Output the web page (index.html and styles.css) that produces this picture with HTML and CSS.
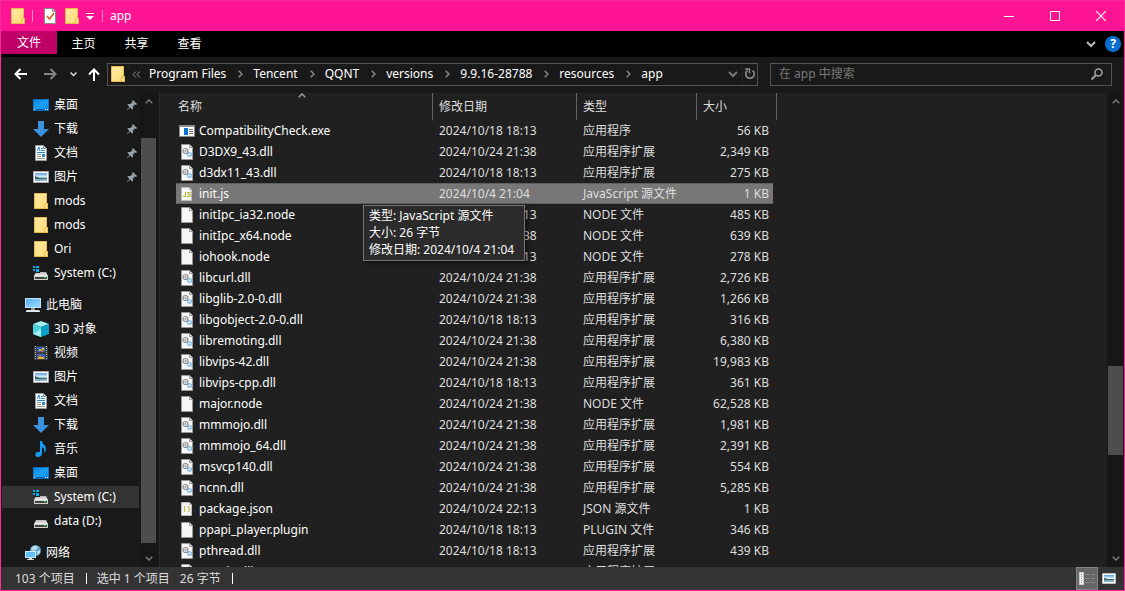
FILE: index.html
```html
<!DOCTYPE html>
<html lang="zh-CN">
<head>
<meta charset="utf-8">
<title>app</title>
<link rel="stylesheet" href="styles.css">
</head>
<body>

<svg class="sprite" aria-hidden="true">
  <defs>
    <linearGradient id="g-folder" x2="1" y2="1"><stop offset="0" stop-color="#ffe9a2"/><stop offset="1" stop-color="#ffdb78"/></linearGradient>
    <linearGradient id="g-blue" x2="1" y2="1"><stop offset="0" stop-color="#0a84e0"/><stop offset=".5" stop-color="#1ba0fb"/><stop offset="1" stop-color="#0d8cf0"/></linearGradient>
    <linearGradient id="g-sky" x2="0" y2="1"><stop offset="0" stop-color="#5a9ee0"/><stop offset=".5" stop-color="#e4f2f8"/><stop offset=".6" stop-color="#6f9fae"/><stop offset="1" stop-color="#8fb8d4"/></linearGradient>
    <linearGradient id="g-screen" x2="1" y2="1"><stop offset="0" stop-color="#56b4f4"/><stop offset="1" stop-color="#9ad8ff"/></linearGradient>
    <linearGradient id="g-drive" x2="0" y2="1"><stop offset="0" stop-color="#b5b5b5"/><stop offset="1" stop-color="#f2f2f2"/></linearGradient>
  </defs>
  <symbol id="folder" viewBox="0 0 16 16">
    <path d="M1.5 0.5h12v10h1v5h-13z" fill="url(#g-folder)" stroke="#e8bb4c"/>
    <path d="M11.5 15.5v-4h1v-1h2v5z" fill="#ffe28c" stroke="#e8bb4c"/>
  </symbol>
  <symbol id="desktop" viewBox="0 0 16 16">
    <path d="M0 2h16v12H0z" fill="#0a72c4"/>
    <path d="M1 3h14v9H1z" fill="url(#g-blue)"/>
    <path d="M1 12h1v1H1zM12 12h1v1h-1zM14 12h1v1h-1z" fill="#fff"/>
    <path d="M3 12h8v1H3z" fill="#0862ae"/>
  </symbol>
  <symbol id="download" viewBox="0 0 16 16">
    <path d="M5 0h6v8h5l-8 8-8-8h5z" fill="#3b92de"/>
  </symbol>
  <symbol id="document" viewBox="0 0 16 16">
    <path d="M2.5.5h8l3 3v12h-11z" fill="#fff" stroke="#999"/>
    <path d="M10.500.5v3h3z" fill="#ccc" stroke="#999"/>
    <path d="M4 6l2-4 1 4M8 3.500h2M8 5.500h4M4 7.500h8" fill="none" stroke="#2486cc"/>
    <path d="M4 9.500h4M4 11.500h4M4 13.500h8" stroke="#999"/>
    <path d="M9 9h3v3H9z" fill="#3580b8"/>
  </symbol>
  <symbol id="picture" viewBox="0 0 16 16">
    <path d="M.5 2.500h15v11H.5z" fill="#fff" stroke="#aaa"/>
    <path d="M2 4h12v8H2z" fill="url(#g-sky)"/>
    <path d="M2 7l4 2 8 .5v.5H2z" fill="#35685a"/>
  </symbol>
  <symbol id="drive" viewBox="0 0 16 16">
    <path d="M3 7h10l2 4H1z" fill="url(#g-drive)"/>
    <path d="M1 11h14v4H1z" fill="#cfcfcf"/>
    <path d="M2 12h12v2H2z" fill="#444"/>
    <path d="M11 12h2v1h-2z" fill="#35e045"/>
  </symbol>
  <symbol id="system-drive" viewBox="0 0 16 16">
    <use href="#drive"/>
    <path d="M0 1h7v7H0z" fill="#222"/>
    <path d="M0 1h2v2H0zM3 1h3v2H3zM0 4h2v2H0zM3 4h3v3H3z" fill="#00adef"/>
  </symbol>
  <symbol id="computer" viewBox="0 0 16 16">
    <path d="M0 1h16v10H0z" fill="#bfe3f8"/>
    <path d="M1 2h14v8H1z" fill="url(#g-screen)"/>
    <path d="M6 11h4v2H6z" fill="#999"/>
    <path d="M1 14l1-1h12l1 1v1H1z" fill="#dce6ec"/>
  </symbol>
  <symbol id="cube" viewBox="0 0 16 16">
    <path d="M8 0l8 3-8 3-8-3z" fill="#a2eef2"/>
    <path d="M0 3l8 3v10l-8-3z" fill="#4cd4e0"/>
    <path d="M16 3L8 6v10l8-3z" fill="#0c9fc8"/>
    <path d="M0 13l8-5v8z" fill="#a4ebef"/>
  </symbol>
  <symbol id="video" viewBox="0 0 16 16">
    <path d="M1 1h14v14H1z" fill="#3c3c3c"/>
    <path d="M2.500 1v14M13.500 1v14" stroke="#aaa" stroke-dasharray="1 1"/>
    <path d="M4 2h8v5H4zM4 9h8v5H4z" fill="#2f63c4"/>
    <path d="M6 4h2v2H6zM9 3h2v2H9zM5 12h6v2H5z" fill="#e3b32c"/>
    <path d="M8 5h2v2H8zM6 10h2v2H6z" fill="#d2622f"/>
  </symbol>
  <symbol id="music" viewBox="0 0 16 16">
    <path d="M7 0h2c0 3 4 4 4 8 0 2-1 3-2 4 1-3 0-5-2-6v6c0 3-2 4-4 4-4 0-3-5 0-5h2z" fill="#159cf5"/>
  </symbol>
  <symbol id="network" viewBox="0 0 16 16">
    <circle cx="10.500" cy="5.500" r="5.500" fill="#5c9fc8"/>
    <path d="M6 4c2-4 5-4 7-2l-2 3-3 1zM12 6l3-1v3l-3 2z" fill="#b7dcea"/>
    <path d="M0 6h11v7H0z" fill="#cceafa"/>
    <path d="M1 7h9v5H1z" fill="#62bcf8"/>
    <path d="M4 13h3v1h2v1H2v-1h2z" fill="#d5d5d5"/>
  </symbol>
  <symbol id="pin" viewBox="0 0 10 10">
    <path d="M6 0l4 4-1 1-1-.5-2 2V9L5 9.500 3 7.500.5 10 0 9.500 2.500 7 .5 5 1 4h2.500l2-2L5 1z" fill="#929ea6"/>
  </symbol>
  <symbol id="file" viewBox="0 0 16 16">
    <path d="M2.500.5h8l3 3v12h-11z" fill="#f6f6f6" stroke="#9a9a9a"/>
    <path d="M10.500.5v3h3" fill="#ddd" stroke="#9a9a9a"/>
  </symbol>
  <symbol id="short-file" viewBox="0 0 16 16">
    <path d="M2.500 1.500h8l2 2v11h-10z" fill="#f6f6f6" stroke="#bbb"/>
    <path d="M10.500 1.500v2h2" fill="#ddd" stroke="#aaa"/>
  </symbol>
  <symbol id="dll" viewBox="0 0 16 16">
    <use href="#file"/>
    <circle cx="10.500" cy="10.500" r="1.800" fill="#e6f2fa" stroke="#8fc0e4" stroke-width="1.400"/>
    <circle cx="6.500" cy="7" r="2.500" fill="#eee" stroke="#8b9094" stroke-width="1.200"/>
    <circle cx="6.500" cy="7" r=".9" fill="#8b9094"/>
  </symbol>
  <symbol id="exe" viewBox="0 0 16 16">
    <path d="M.5 2.500h15v11H.5z" fill="#fff" stroke="#8c8c8c"/>
    <path d="M0 2h16v2H0z" fill="#8c8c8c"/>
    <path d="M5 5h4v7H5z" fill="#0874d1"/>
    <path d="M10 6.500h4M10 8.500h4M10 10.500h4" stroke="#777"/>
  </symbol>
  <symbol id="js" viewBox="0 0 16 16">
    <use href="#short-file"/>
    <path d="M6.500 6v4.500H4M11.500 6.500H9v1.500h2v2.500H8" fill="none" stroke="#bcbb3c" stroke-width="1.200"/>
  </symbol>
  <symbol id="json" viewBox="0 0 16 16">
    <use href="#short-file"/>
    <path d="M6.500 5.500h-1v5h1M9 5.500h1v5H9M4.500 8h1M10 8h1" fill="none" stroke="#bcbb3c"/>
  </symbol>
  <symbol id="up" viewBox="0 0 8 5"><path d="M.7 4.300L4 1l3.300 3.300" fill="none" stroke="currentColor" stroke-width="1.500"/></symbol>
  <symbol id="down" viewBox="0 0 8 5"><path d="M.7.7L4 4 7.300.7" fill="none" stroke="currentColor" stroke-width="1.500"/></symbol>
  <symbol id="next" viewBox="0 0 5 8"><path d="M.7.7L4 4 .7 7.300" fill="none" stroke="currentColor" stroke-width="1.500"/></symbol>
</svg>

<div class="window">

  <header class="titlebar">
    <svg class="icon"><use href="#folder"/></svg>
    <span class="sep first"></span>
    <button class="quick" aria-label="属性">
      <svg class="icon" viewBox="0 0 16 16"><path d="M2.500.5h8l3 3v12h-11z" fill="#fff" stroke="#8a8a8a"/><path d="M10.500.5v3h3" fill="#ddd" stroke="#8a8a8a"/><path d="M5 8l2.500 3L12 5" fill="none" stroke="#e0561f" stroke-width="1.500"/></svg>
    </button>
    <button class="quick" aria-label="新建文件夹"><svg class="icon"><use href="#folder"/></svg></button>
    <button class="customize" aria-label="自定义快速访问工具栏">
      <svg width="8" height="7" viewBox="0 0 8 7"><path d="M0 0h8v1H0zM0 3h8L4 7z" fill="#fff"/></svg>
    </button>
    <span class="sep"></span>
    <h1>app</h1>
    <div class="controls">
      <button aria-label="最小化"><svg width="10" height="10"><path d="M0 5.500h10" stroke="#fff"/></svg></button>
      <button aria-label="最大化"><svg width="10" height="10"><path d="M.5.5h9v9h-9z" fill="none" stroke="#fff"/></svg></button>
      <button aria-label="关闭"><svg width="10" height="10"><path d="M0 0l10 10M10 0L0 10" stroke="#fff" stroke-width="1.200"/></svg></button>
    </div>
  </header>

  <nav class="ribbon">
    <button class="file-tab">文件</button>
    <button>主页</button>
    <button>共享</button>
    <button>查看</button>
    <div class="ribbon-end">
      <button class="plain" aria-label="展开功能区"><svg width="10" height="7" viewBox="0 0 10 7"><path d="M1 1l4 4 4-4" fill="none" stroke="#bbb" stroke-width="2"/></svg></button>
      <button class="help" aria-label="帮助">?</button>
    </div>
  </nav>

  <div class="navbar">
    <button class="nav-arrow" aria-label="后退"><svg width="13" height="12" viewBox="0 0 13 12"><path d="M13 6H2M6.500 1l-5 5 5 5" fill="none" stroke="#fff" stroke-width="2"/></svg></button>
    <button class="nav-arrow" aria-label="前进"><svg width="13" height="12" viewBox="0 0 13 12"><path d="M0 6h11M6.500 1l5 5-5 5" fill="none" stroke="#868686" stroke-width="2"/></svg></button>
    <button class="nav-recent" aria-label="最近浏览的位置"><svg width="7" height="5" viewBox="0 0 7 5"><path d="M.5.5l3 3 3-3" fill="none" stroke="#ddd" stroke-width="1.500"/></svg></button>
    <button class="nav-up" aria-label="向上"><svg width="12" height="13" viewBox="0 0 12 13"><path d="M6 13V2M1 6.500l5-5 5 5" fill="none" stroke="#fff" stroke-width="2"/></svg></button>

    <div class="address">
      <svg class="icon"><use href="#folder"/></svg>
      <svg class="more" width="9" height="7" viewBox="0 0 9 7"><path d="M4 .5l-3 3 3 3M8 .5l-3 3 3 3" fill="none" stroke="#999"/></svg>
      <a href="#">Program Files</a><svg class="next"><use href="#next"/></svg>
      <a href="#">Tencent</a><svg class="next"><use href="#next"/></svg>
      <a href="#">QQNT</a><svg class="next"><use href="#next"/></svg>
      <a href="#">versions</a><svg class="next"><use href="#next"/></svg>
      <a href="#">9.9.16-28788</a><svg class="next"><use href="#next"/></svg>
      <a href="#">resources</a><svg class="next"><use href="#next"/></svg>
      <a href="#">app</a>
      <div class="address-end">
        <button class="plain" aria-label="以前的位置"><svg width="10" height="7" viewBox="0 0 10 7"><path d="M1 1l4 4 4-4" fill="none" stroke="#777" stroke-width="2"/></svg></button>
        <button class="refresh" aria-label="刷新"><svg width="12" height="12" viewBox="0 0 12 12"><path d="M8.500 2.500a4.300 4.300 0 1 1-5 0" fill="none" stroke="#8a8a8a" stroke-width="1.600"/><path d="M1 1h4.500v4.500" fill="none" stroke="#8a8a8a" stroke-width="1.500"/></svg></button>
      </div>
    </div>

    <label class="search">
      <input type="text" placeholder="在 app 中搜索" aria-label="搜索">
      <svg width="12" height="12" viewBox="0 0 12 12"><circle cx="7.500" cy="4.500" r="3.500" fill="none" stroke="#a0a0a0" stroke-width="1.600"/><path d="M5 7l-4.500 4.500" stroke="#a0a0a0" stroke-width="2"/></svg>
    </label>
  </div>

  <div class="main">
    <aside class="sidebar">
      <div class="tree">
        <ul>
          <li><a href="#"><svg class="icon"><use href="#desktop"/></svg>桌面<svg class="pin"><use href="#pin"/></svg></a></li>
          <li><a href="#"><svg class="icon"><use href="#download"/></svg>下载<svg class="pin"><use href="#pin"/></svg></a></li>
          <li><a href="#"><svg class="icon"><use href="#document"/></svg>文档<svg class="pin"><use href="#pin"/></svg></a></li>
          <li><a href="#"><svg class="icon"><use href="#picture"/></svg>图片<svg class="pin"><use href="#pin"/></svg></a></li>
          <li><a href="#"><svg class="icon"><use href="#folder"/></svg>mods</a></li>
          <li><a href="#"><svg class="icon"><use href="#folder"/></svg>mods</a></li>
          <li><a href="#"><svg class="icon"><use href="#folder"/></svg>Ori</a></li>
          <li><a href="#"><svg class="icon"><use href="#system-drive"/></svg>System (C:)</a></li>
        </ul>
        <ul>
          <li><a class="root" href="#"><svg class="icon"><use href="#computer"/></svg>此电脑</a></li>
          <li><a href="#"><svg class="icon"><use href="#cube"/></svg>3D 对象</a></li>
          <li><a href="#"><svg class="icon"><use href="#video"/></svg>视频</a></li>
          <li><a href="#"><svg class="icon"><use href="#picture"/></svg>图片</a></li>
          <li><a href="#"><svg class="icon"><use href="#document"/></svg>文档</a></li>
          <li><a href="#"><svg class="icon"><use href="#download"/></svg>下载</a></li>
          <li><a href="#"><svg class="icon"><use href="#music"/></svg>音乐</a></li>
          <li><a href="#"><svg class="icon"><use href="#desktop"/></svg>桌面</a></li>
          <li><a class="current" href="#"><svg class="icon"><use href="#system-drive"/></svg>System (C:)</a></li>
          <li><a href="#"><svg class="icon"><use href="#drive"/></svg>data (D:)</a></li>
        </ul>
        <ul>
          <li><a class="root" href="#"><svg class="icon"><use href="#network"/></svg>网络</a></li>
        </ul>
      </div>
      <div class="scrollbar">
        <button aria-label="向上滚动"><svg class="chev"><use href="#up"/></svg></button>
        <div class="track tree-track"><div class="thumb"></div></div>
        <button aria-label="向下滚动"><svg class="chev"><use href="#down"/></svg></button>
      </div>
    </aside>

    <section class="content">
      <div class="listing">
        <table>
          <colgroup><col class="c-name"><col class="c-date"><col class="c-type"><col class="c-size"></colgroup>
          <thead>
            <tr><th>名称<svg class="sort"><use href="#up"/></svg></th><th>修改日期</th><th>类型</th><th>大小</th></tr>
          </thead>
          <tbody>
            <tr><td><svg class="icon"><use href="#exe"/></svg>CompatibilityCheck.exe</td><td>2024/10/18 18:13</td><td>应用程序</td><td>56 KB</td></tr>
            <tr><td><svg class="icon"><use href="#dll"/></svg>D3DX9_43.dll</td><td>2024/10/24 21:38</td><td>应用程序扩展</td><td>2,349 KB</td></tr>
            <tr><td><svg class="icon"><use href="#dll"/></svg>d3dx11_43.dll</td><td>2024/10/18 18:13</td><td>应用程序扩展</td><td>275 KB</td></tr>
            <tr class="selected"><td><svg class="icon"><use href="#js"/></svg>init.js</td><td>2024/10/4 21:04</td><td>JavaScript 源文件</td><td>1 KB</td></tr>
            <tr><td><svg class="icon"><use href="#file"/></svg>initIpc_ia32.node</td><td>2024/10/18 18:13</td><td>NODE 文件</td><td>485 KB</td></tr>
            <tr><td><svg class="icon"><use href="#file"/></svg>initIpc_x64.node</td><td>2024/10/24 21:38</td><td>NODE 文件</td><td>639 KB</td></tr>
            <tr><td><svg class="icon"><use href="#file"/></svg>iohook.node</td><td>2024/10/18 18:13</td><td>NODE 文件</td><td>278 KB</td></tr>
            <tr><td><svg class="icon"><use href="#dll"/></svg>libcurl.dll</td><td>2024/10/24 21:38</td><td>应用程序扩展</td><td>2,726 KB</td></tr>
            <tr><td><svg class="icon"><use href="#dll"/></svg>libglib-2.0-0.dll</td><td>2024/10/24 21:38</td><td>应用程序扩展</td><td>1,266 KB</td></tr>
            <tr><td><svg class="icon"><use href="#dll"/></svg>libgobject-2.0-0.dll</td><td>2024/10/18 18:13</td><td>应用程序扩展</td><td>316 KB</td></tr>
            <tr><td><svg class="icon"><use href="#dll"/></svg>libremoting.dll</td><td>2024/10/24 21:38</td><td>应用程序扩展</td><td>6,380 KB</td></tr>
            <tr><td><svg class="icon"><use href="#dll"/></svg>libvips-42.dll</td><td>2024/10/24 21:38</td><td>应用程序扩展</td><td>19,983 KB</td></tr>
            <tr><td><svg class="icon"><use href="#dll"/></svg>libvips-cpp.dll</td><td>2024/10/18 18:13</td><td>应用程序扩展</td><td>361 KB</td></tr>
            <tr><td><svg class="icon"><use href="#file"/></svg>major.node</td><td>2024/10/24 21:38</td><td>NODE 文件</td><td>62,528 KB</td></tr>
            <tr><td><svg class="icon"><use href="#dll"/></svg>mmmojo.dll</td><td>2024/10/24 21:38</td><td>应用程序扩展</td><td>1,981 KB</td></tr>
            <tr><td><svg class="icon"><use href="#dll"/></svg>mmmojo_64.dll</td><td>2024/10/24 21:38</td><td>应用程序扩展</td><td>2,391 KB</td></tr>
            <tr><td><svg class="icon"><use href="#dll"/></svg>msvcp140.dll</td><td>2024/10/24 21:38</td><td>应用程序扩展</td><td>554 KB</td></tr>
            <tr><td><svg class="icon"><use href="#dll"/></svg>ncnn.dll</td><td>2024/10/24 21:38</td><td>应用程序扩展</td><td>5,285 KB</td></tr>
            <tr><td><svg class="icon"><use href="#json"/></svg>package.json</td><td>2024/10/24 22:13</td><td>JSON 源文件</td><td>1 KB</td></tr>
            <tr><td><svg class="icon"><use href="#file"/></svg>ppapi_player.plugin</td><td>2024/10/18 18:13</td><td>PLUGIN 文件</td><td>346 KB</td></tr>
            <tr><td><svg class="icon"><use href="#dll"/></svg>pthread.dll</td><td>2024/10/18 18:13</td><td>应用程序扩展</td><td>439 KB</td></tr>
            <tr><td><svg class="icon"><use href="#dll"/></svg>quazip.dll</td><td>2024/10/24 21:38</td><td>应用程序扩展</td><td>226 KB</td></tr>
          </tbody>
        </table>
        <div class="tooltip" role="tooltip">类型: JavaScript 源文件<br>大小: 26 字节<br>修改日期: 2024/10/4 21:04</div>
      </div>
      <div class="scrollbar">
        <button aria-label="向上滚动"><svg class="chev"><use href="#up"/></svg></button>
        <div class="track list-track"><div class="thumb"></div></div>
        <button aria-label="向下滚动"><svg class="chev"><use href="#down"/></svg></button>
      </div>
    </section>
  </div>

  <footer class="statusbar">
    <span class="count">103 个项目</span>
    <span class="picked">选中 1 个项目</span>
    <span class="bytes">26 字节</span>
    <div class="views">
      <button class="on" aria-label="详细信息">
        <svg width="16" height="13" viewBox="0 0 16 13"><path d="M0 0h5v13H0z" fill="#ccc"/><path d="M1 1h3v3H1zM1 5h3v3H1zM1 9h3v3H1z" fill="#fff"/><path d="M2 2h1v1H2z" fill="#176a9c"/><path d="M2 6h1v1H2z" fill="#2a8cf0"/><path d="M2 10h1v1H2z" fill="#d22"/><path d="M6 2.500h4M12 2.500h4M6 6.500h4M12 6.500h4M6 10.500h4M12 10.500h4" stroke="#8c8c8c"/></svg>
      </button>
      <button aria-label="大缩略图">
        <svg width="14" height="11" viewBox="0 0 14 11"><path d="M.5.5h13v10H.5z" fill="#fff" stroke="#bbb"/><path d="M2 2h10v7H2z" fill="url(#g-sky)"/><path d="M2 5l4 1h6v1H2z" fill="#35685a"/></svg>
      </button>
    </div>
  </footer>

</div>

</body>
</html>
```
FILE: styles.css
```css
* {
  box-sizing: border-box;
}

body {
  margin: 0;
  background: #202020;
  color: #fff;
  font: 12px/16px "Noto Sans", "Noto Sans CJK SC", sans-serif;
}

button {
  margin: 0;
  padding: 0;
  border: 0;
  background: none;
  color: inherit;
  font: inherit;
}

a {
  color: inherit;
  text-decoration: none;
}

svg {
  display: block;
  flex: none;
}

.sprite {
  position: absolute;
  width: 0;
  height: 0;
}

.icon {
  width: 16px;
  height: 16px;
}

.window {
  display: flex;
  flex-direction: column;
  height: 100vh;
  border: 1px solid #ff2b9c;
  overflow: hidden;
}

/* title bar */

.titlebar {
  display: flex;
  align-items: center;
  flex: none;
  height: 30px;
  padding-left: 9px;
  background: #ff1493;
}

.sep {
  width: 1px;
  height: 12px;
  margin: 0 7px 0 8px;
  background: #ff8ac8;
}

.sep.first {
  margin: 0 9px 0 6px;
}

.quick {
  width: 22px;
}

.titlebar h1 {
  margin: 0;
  font-size: 12px;
  font-weight: normal;
}

.controls {
  display: flex;
  height: 100%;
  margin-left: auto;
}

.controls button {
  display: flex;
  align-items: center;
  justify-content: center;
  width: 46px;
}

/* ribbon tabs */

.ribbon {
  display: flex;
  flex: none;
  height: 26px;
  background: #000;
}

.ribbon > button {
  width: 53px;
  height: 26px;
}

.ribbon > .file-tab {
  width: 56px;
  height: 23px;
  background: #bf0067;
}

.ribbon-end {
  display: flex;
  align-items: center;
  gap: 7px;
  margin-left: auto;
  padding-right: 3px;
}

.help {
  width: 16px;
  height: 16px;
  border-radius: 50%;
  background: #0a6fd0;
  font-weight: bold;
}

/* navigation row */

.navbar {
  display: flex;
  align-items: center;
  flex: none;
  height: 36px;
  padding: 0 12px 2px 4px;
  background: #191919;
}

.navbar > button {
  display: flex;
  justify-content: center;
}

.nav-arrow {
  width: 30px;
}

.nav-recent {
  width: 16px;
}

.nav-up {
  width: 26px;
}

.address,
.search {
  display: flex;
  align-items: center;
  height: 23px;
  border: 1px solid #535353;
}

.address {
  flex: 1;
  min-width: 0;
  padding-left: 2px;
}

.address a {
  white-space: nowrap;
}

.more {
  margin: 0 8px 0 6px;
}

.next {
  width: 5px;
  height: 8px;
  margin: 0 10px 0 12px;
  color: #888;
}

.address-end {
  display: flex;
  align-items: center;
  height: 100%;
  margin-left: auto;
}

.plain {
  padding: 0 2px;
}

.refresh {
  height: 100%;
  margin-left: 2px;
  padding: 0 1px;
  border-left: 1px solid #222;
}

.search {
  width: 342px;
  margin-left: 12px;
  padding: 0 8px;
}

.search input {
  flex: 1;
  min-width: 0;
  padding: 0;
  border: 0;
  background: none;
  color: #fff;
  font: inherit;
  outline: none;
}

.search input::placeholder {
  color: #777;
}

/* folder tree */

.main {
  display: flex;
  flex: 1;
  min-height: 0;
}

.sidebar {
  display: flex;
  flex: none;
  width: 159px;
  padding-right: 2px;
  border-right: 1px solid #2b2b2b;
  background: #191919;
}

.tree {
  flex: 1;
  padding-top: 1px;
  overflow: hidden;
}

.tree ul {
  display: grid;
  gap: 2px;
  margin: 0 0 10px;
  padding: 0;
  list-style: none;
}

.tree a {
  display: flex;
  align-items: center;
  gap: 5px;
  height: 22px;
  margin: 0 1px;
  padding: 0 2px 0 31px;
}

.tree a.root {
  padding-left: 23px;
}

.tree a.current {
  background: #333;
}

.pin {
  width: 10px;
  height: 10px;
  margin-left: auto;
}

/* scroll bars */

.scrollbar {
  display: flex;
  flex: none;
  flex-direction: column;
  width: 17px;
  padding: 0 1px;
  background: #171717;
}

.scrollbar button {
  display: flex;
  align-items: center;
  justify-content: center;
  height: 17px;
}

.chev {
  width: 8px;
  height: 5px;
  color: #777;
}

.track {
  display: flex;
  flex: 1;
  flex-direction: column;
}

.thumb {
  background: #4d4d4d;
}

.tree-track {
  padding: 28px 0 7px;
}

.tree-track .thumb {
  flex: 1;
}

.list-track {
  justify-content: flex-end;
  padding-bottom: 95px;
}

.list-track .thumb {
  height: 89px;
}

/* file list */

.content {
  display: flex;
  flex: 1;
  min-width: 0;
  background: #202020;
}

.listing {
  position: relative;
  flex: 1;
  min-width: 0;
  padding-left: 16px;
  overflow: hidden;
}

table {
  width: 601px;
  border-collapse: separate;
  border-spacing: 0;
  table-layout: fixed;
}

.c-name {
  width: 257px;
}

.c-date {
  width: 144px;
}

.c-type {
  width: 120px;
}

.c-size {
  width: 80px;
}

th {
  position: relative;
  height: 27px;
  padding: 0 6px;
  border-right: 1px solid #636363;
  color: #dedede;
  font-weight: normal;
  text-align: left;
}

th:first-child {
  padding-left: 2px;
}

.sort {
  position: absolute;
  top: 0;
  left: 122px;
  width: 8px;
  height: 5px;
  color: #999;
}

td {
  height: 21px;
  padding: 0 6px;
  color: #dedede;
  white-space: nowrap;
}

td:first-child {
  display: flex;
  align-items: center;
  gap: 4px;
  padding-left: 3px;
  color: #fff;
}

td:last-child {
  padding-right: 4px;
  border-right: 4px solid transparent;
  background-clip: padding-box;
  text-align: right;
}

.selected td {
  background-color: #777;
  box-shadow: inset 0 1px #606060, inset 0 -1px #606060;
}

.tooltip {
  position: absolute;
  top: 112px;
  left: 203px;
  min-width: 162px;
  padding: 1px 5px 2px;
  border: 1px solid #767676;
  background: #2b2b2b;
  box-shadow: 3px 3px 3px rgba(0, 0, 0, .4);
  line-height: 17px;
  white-space: nowrap;
}

/* status bar */

.statusbar {
  display: flex;
  align-items: center;
  flex: none;
  height: 23px;
  padding-left: 14px;
  background: #333;
  color: #dedede;
}

.count,
.bytes {
  display: flex;
  align-items: center;
}

.count::after,
.bytes::after {
  width: 1px;
  height: 11px;
  margin: 0 10px 0 11px;
  background: #fff;
  content: "";
}

.bytes {
  margin-left: 10px;
}

.views {
  display: flex;
  height: 100%;
  margin-left: auto;
  padding-right: 4px;
}

.views button {
  display: flex;
  align-items: center;
  justify-content: center;
  width: 22px;
}

.views .on {
  border: 1px solid #838383;
  background: #666;
}
```
